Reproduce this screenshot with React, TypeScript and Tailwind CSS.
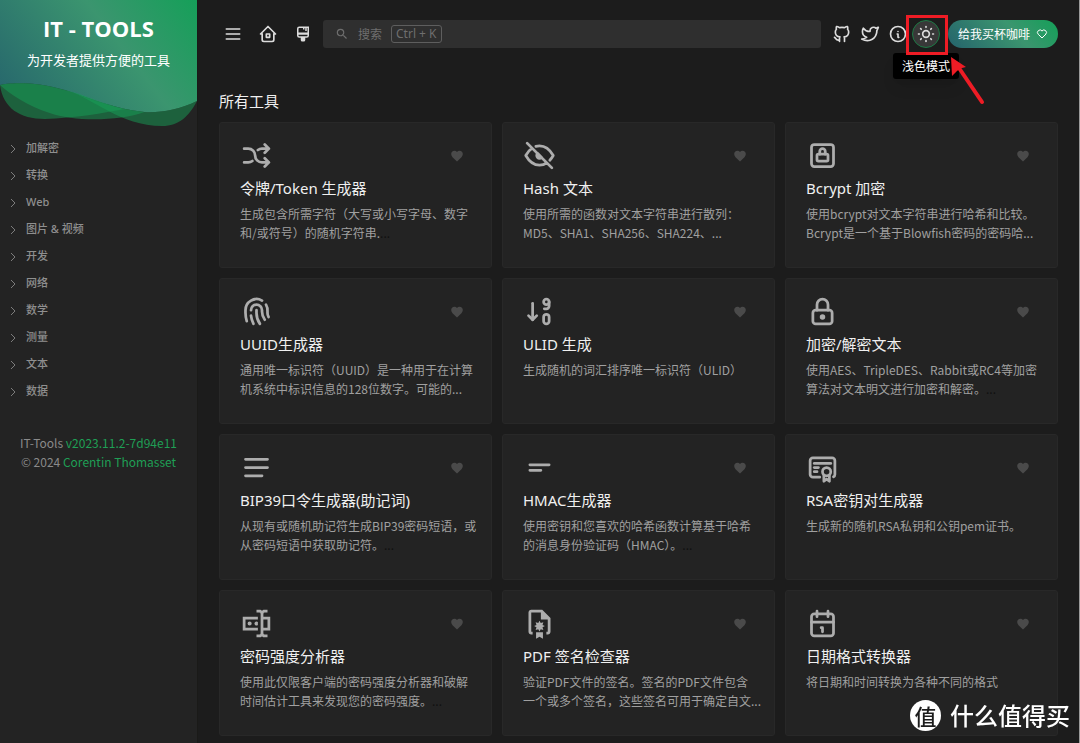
import type { ReactNode } from 'react';
import {
  TbMenu2,
  TbHome2,
  TbBrandGithub,
  TbBrandTwitter,
  TbInfoCircle,
  TbSun,
  TbHeart,
  TbLockSquare,
  TbFingerprint,
  TbSortDescendingNumbers,
  TbLock,
  TbCertificate,
} from 'react-icons/tb';
import { MdFavorite, MdSearch } from 'react-icons/md';

function LineIcon({ children }: { children: ReactNode }) {
  return (
    <svg
      viewBox="0 0 24 24"
      className="size-[33px]"
      fill="none"
      stroke="currentColor"
      strokeWidth="2"
      strokeLinecap="round"
      strokeLinejoin="round"
      aria-hidden="true"
    >
      {children}
    </svg>
  );
}

function SolidIcon({ d, className }: { d: string; className: string }) {
  return (
    <svg viewBox="0 0 24 24" className={className} fill="currentColor" fillRule="evenodd" aria-hidden="true">
      <path d={d} />
    </svg>
  );
}

const brushPath =
  'M4 5a3 3 0 0 1 3-3h13v12a3 3 0 0 1-3 3h-2v3a2 2 0 0 1-2 2h-2a2 2 0 0 1-2-2v-3H7a3 3 0 0 1-3-3V5m14-1h-1v4h-2V4h-1v2h-2V4H7a1 1 0 0 0-1 1v5h12V4M6 13v1a1 1 0 0 0 1 1h10a1 1 0 0 0 1-1v-1H6Z';
const passwordPath =
  'M17 7h5v10h-5v2a1 1 0 0 0 1 1h2v2h-2.5c-.55 0-1.5-.45-1.5-1c0 .55-.95 1-1.5 1H12v-2h2a1 1 0 0 0 1-1V5a1 1 0 0 0-1-1h-2V2h2.5c.55 0 1.5.45 1.5 1c0-.55.95-1 1.5-1H20v2h-2a1 1 0 0 0-1 1v2M2 7h11v2H4v6h9v2H2V7m18 8V9h-3v6h3M8.5 12A1.5 1.5 0 0 0 7 10.5A1.5 1.5 0 0 0 5.5 12A1.5 1.5 0 0 0 7 13.5A1.5 1.5 0 0 0 8.5 12m4.5-1.11c-.61-.56-1.56-.51-2.12.11c-.56.6-.51 1.55.12 2.11c.55.52 1.43.52 2 0v-2.22Z';
const filePath =
  'M6 2h8l6 6v10c0 1.1-.9 2-2 2h-1v-2h1V9h-5V4H6v14h1v2H6c-1.1 0-2-.9-2-2V4c0-1.1.9-2 2-2Zm6 8 .9 1.7 1.9-.6-.6 1.9 1.7.9-1.7.9.6 1.9-1.9-.6-.9 1.7-.9-1.7-1.9.6.6-1.9-1.7-.9 1.7-.9-.6-1.9 1.9.6.9-1.7ZM9.5 18.3h5V23L12 21.6 9.5 23v-4.7Z';

const tools: { title: string; lines: string[]; more?: boolean; icon: ReactNode }[] = [
  {
    title: '令牌/Token 生成器',
    lines: ['生成包含所需字符（大写或小写字母、数字', '和/或符号）的随机字符串.'],
    more: true,
    icon: (
      <LineIcon>
        <path d="M18 4l3 3l-3 3M18 20l3 -3l-3 -3M3 7h3a5 5 0 0 1 5 5a5 5 0 0 0 5 5h5M21 7h-5a4.978 4.978 0 0 0 -3 1M9 16a4.984 4.984 0 0 1 -3 1h-3" />
      </LineIcon>
    ),
  },
  {
    title: 'Hash 文本',
    lines: ['使用所需的函数对文本字符串进行散列：', 'MD5、SHA1、SHA256、SHA224、...'],
    icon: (
      <LineIcon>
        <path d="M3 3l18 18M9.363 5.365a9.466 9.466 0 0 1 2.637 -.365c4 0 7.333 2.333 10 7c-.778 1.361 -1.612 2.524 -2.503 3.488m-2.14 1.861c-1.631 1.1 -3.415 1.651 -5.357 1.651c-4 0 -7.333 -2.333 -10 -7c1.369 -2.395 2.913 -4.175 4.632 -5.341" />
        <path d="M10.584 10.587a2 2 0 0 0 2.828 2.83z" fill="currentColor" />
      </LineIcon>
    ),
  },
  {
    title: 'Bcrypt 加密',
    lines: ['使用bcrypt对文本字符串进行哈希和比较。', 'Bcrypt是一个基于Blowfish密码的密码哈...'],
    icon: <TbLockSquare className="size-[33px]" />,
  },
  {
    title: 'UUID生成器',
    lines: ['通用唯一标识符（UUID）是一种用于在计算', '机系统中标识信息的128位数字。可能的...'],
    icon: <TbFingerprint className="size-[33px]" />,
  },
  {
    title: 'ULID 生成',
    lines: ['生成随机的词汇排序唯一标识符（ULID）'],
    icon: <TbSortDescendingNumbers className="size-[33px]" />,
  },
  {
    title: '加密/解密文本',
    lines: ['使用AES、TripleDES、Rabbit或RC4等加密', '算法对文本明文进行加密和解密。'],
    more: true,
    icon: <TbLock className="size-[33px]" />,
  },
  {
    title: 'BIP39口令生成器(助记词)',
    lines: ['从现有或随机助记符生成BIP39密码短语，或', '从密码短语中获取助记符。'],
    more: true,
    icon: (
      <LineIcon>
        <path d="M4 6h16M4 12h16M4 18h12" />
      </LineIcon>
    ),
  },
  {
    title: 'HMAC生成器',
    lines: ['使用密钥和您喜欢的哈希函数计算基于哈希', '的消息身份验证码（HMAC）。'],
    more: true,
    icon: (
      <LineIcon>
        <path d="M5 10h14M5 14h8" />
      </LineIcon>
    ),
  },
  {
    title: 'RSA密钥对生成器',
    lines: ['生成新的随机RSA私钥和公钥pem证书。'],
    icon: <TbCertificate className="size-[33px]" />,
  },
  {
    title: '密码强度分析器',
    lines: ['使用此仅限客户端的密码强度分析器和破解', '时间估计工具来发现您的密码强度。'],
    more: true,
    icon: <SolidIcon className="size-[33px]" d={passwordPath} />,
  },
  {
    title: 'PDF 签名检查器',
    lines: ['验证PDF文件的签名。签名的PDF文件包含', '一个或多个签名，这些签名可用于确定自文...'],
    icon: <SolidIcon className="size-[33px]" d={filePath} />,
  },
  {
    title: '日期格式转换器',
    lines: ['将日期和时间转换为各种不同的格式'],
    icon: (
      <LineIcon>
        <rect x="4" y="5" width="16" height="16" rx="2" />
        <path d="M16 3v4M8 3v4M4 11h16M11 15h1M12 15v3" />
      </LineIcon>
    ),
  },
];

const categories = ['加解密', '转换', 'Web', '图片 & 视频', '开发', '网络', '数学', '测量', '文本', '数据'];

function ToolCard({ tool }: { tool: (typeof tools)[number] }) {
  return (
    <article className="min-h-[146px] min-w-0 rounded-[3px] border border-[#282828] bg-[#232323] px-5 pt-4 pb-5">
      <div className="flex items-center justify-between pr-[7px] text-[#adadad]">
        {tool.icon}
        <button type="button" aria-label={`收藏 ${tool.title}`} className="text-[#4a4a4a]">
          <MdFavorite className="size-[14px]" />
        </button>
      </div>
      <h3 className="mt-1 font-['Noto_Sans','Noto_Sans_CJK_SC',sans-serif] text-[15px] leading-6 whitespace-nowrap text-[#f0f0f0]">
        <a href="#tool">{tool.title}</a>
      </h3>
      <p className="mt-1 text-xs leading-[19px] whitespace-nowrap text-[#a0a0a0]">
        {tool.lines.map((line, i) => (
          <span key={line} className="block">
            {line}
            {tool.more && i === tool.lines.length - 1 && <span className="text-[#101010]">...</span>}
          </span>
        ))}
      </p>
    </article>
  );
}

function Sidebar() {
  return (
    <aside className="w-[198px] shrink-0 border-r border-[#1a1a18] bg-[#232323]">
      <a href="#home" className="relative block h-[126px] text-center text-white">
        <svg viewBox="0 0 198 126" preserveAspectRatio="none" className="absolute inset-0 size-full" aria-hidden="true">
          <defs>
            <linearGradient id="hero" gradientUnits="userSpaceOnUse" x1="10" y1="125" x2="190" y2="-15">
              <stop offset="0" stopColor="#25636c" />
              <stop offset="0.6" stopColor="#3b956f" />
              <stop offset="1" stopColor="#14a058" />
            </linearGradient>
          </defs>
          <path d="M0 0H198V101C180 110 160 113 145 112C115 109 90 98 65 90C40 82 10 82 0 85Z" fill="url(#hero)" />
          <g fill="#18a058" fillOpacity="0.5">
            <path d="M0 85C10 82 40 82 65 90C90 98 115 109 145 112C120 121 75 122 50 113C28 106 10 94 0 85Z" />
            <path d="M0 85C3 108 20 119 45 119C75 118 105 113 125 109C100 103 85 94 65 90C40 82 10 82 0 85Z" />
            <path d="M65 90C95 98 120 126 163 126C180 126 190 116 198 101C180 110 160 113 145 112C115 109 90 98 65 90Z" />
          </g>
        </svg>
        <div className="relative pt-3">
          <div className="font-['Open_Sans'] text-[22px] leading-8 font-bold">IT - TOOLS</div>
          <div className="mt-1 text-[13px] leading-6">为开发者提供方便的工具</div>
        </div>
      </a>
      <nav className="mt-[9px]">
        {categories.map((name) => (
          <button
            key={name}
            type="button"
            className="flex h-[27px] w-full items-center gap-[10px] pl-[10px] text-left font-['Noto_Sans','Noto_Sans_CJK_SC',sans-serif] text-[11px] font-medium text-[#8f8f8f]"
          >
            <svg viewBox="0 0 6 10" className="h-[10px] w-[6px]" fill="none" stroke="#7c7c7c" aria-hidden="true">
              <path d="M1 1l4 4l-4 4" />
            </svg>
            {name}
          </button>
        ))}
      </nav>
      <footer className="mt-7 text-center text-xs leading-[19px] text-[#8a8a8a]">
        <div>
          IT-Tools{' '}
          <a href="#version" className="text-[#1f9f55]">
            v2023.11.2-7d94e11
          </a>
        </div>
        <div>
          © 2024{' '}
          <a href="#author" className="text-[#1f9f55]">
            Corentin Thomasset
          </a>
        </div>
      </footer>
    </aside>
  );
}

function IconButton({ label, children }: { label: string; children: ReactNode }) {
  return (
    <button type="button" aria-label={label} className="flex size-7 shrink-0 items-center justify-center">
      {children}
    </button>
  );
}

function TopBar() {
  return (
    <header className="flex items-center text-[#dcdcdc]">
      <div className="mr-[6px] flex gap-[7px]">
        <IconButton label="菜单">
          <TbMenu2 className="size-5" />
        </IconButton>
        <IconButton label="首页">
          <TbHome2 className="size-5" />
        </IconButton>
        <IconButton label="界面">
          <SolidIcon className="size-[18px]" d={brushPath} />
        </IconButton>
      </div>
      <button type="button" className="flex h-7 min-w-0 grow items-center rounded-[3px] bg-[#2f2f2f] pl-3 text-xs text-[#6e6e6e]">
        <MdSearch className="mr-[9px] size-[14px]" />
        搜索
        <kbd className="ml-[9px] rounded-[3px] border border-[#5e5e5e] px-1 font-['Noto_Sans'] leading-4">Ctrl + K</kbd>
      </button>
      <div className="ml-[7px] flex">
        <IconButton label="GitHub">
          <TbBrandGithub className="size-5" />
        </IconButton>
        <IconButton label="Twitter">
          <TbBrandTwitter className="size-5" />
        </IconButton>
        <IconButton label="关于">
          <TbInfoCircle className="size-5" />
        </IconButton>
        <div className="relative">
          <button
            type="button"
            aria-label="浅色模式"
            className="flex size-7 items-center justify-center rounded-full border border-[#1c7a44] bg-[#383838]"
          >
            <TbSun className="size-5" />
          </button>
          <div
            role="tooltip"
            className="absolute top-[33px] left-1/2 -translate-x-1/2 rounded-[3px] bg-black px-[9px] text-xs leading-[26px] whitespace-nowrap text-white shadow-lg"
          >
            浅色模式
          </div>
          <div className="absolute -top-[5px] -left-[6px] h-[40px] w-[42px] border-[3px] border-[#ee1c25]" />
          <svg viewBox="0 0 38 50" className="absolute top-9 left-[37px] h-[50px] w-[38px] max-w-none" aria-hidden="true">
            <path d="M10 12L33 46" stroke="#ee1c25" strokeWidth="4" strokeLinecap="round" />
            <path d="M2 1L17 11L11 12.500L8 15L3 20Z" fill="#ee1c25" />
          </svg>
        </div>
      </div>
      <a
        href="#support"
        className="ml-2 flex h-7 shrink-0 items-center gap-[6px] rounded-full bg-linear-[48deg,#25636c_0%,#3b956f_60%,#14a058_100%] px-[10px] text-xs text-white"
      >
        给我买杯咖啡
        <TbHeart className="size-3" />
      </a>
    </header>
  );
}

export default function App() {
  return (
    <div className="flex h-screen overflow-hidden border-r border-[#9a9a9a] bg-[#1c1c1c] font-['Noto_Sans_CJK_SC',sans-serif]">
      <Sidebar />
      <main className="min-w-0 grow px-[21px] pt-5">
        <TopBar />
        <h2 className="mt-[41px] text-[15px] leading-6 text-[#f0f0f0]">所有工具</h2>
        <div className="mt-[9px] grid grid-cols-3 gap-[10px]">
          {tools.map((tool) => (
            <ToolCard key={tool.title} tool={tool} />
          ))}
        </div>
      </main>
      <div className="fixed right-[10px] bottom-3 flex items-center gap-[9px] text-2xl leading-8 text-white">
        <span className="flex size-[31px] items-center justify-center rounded-full bg-white text-[22px] font-medium text-[#1c1c1c]">
          值
        </span>
        <span className="font-medium">什么值得买</span>
      </div>
    </div>
  );
}
